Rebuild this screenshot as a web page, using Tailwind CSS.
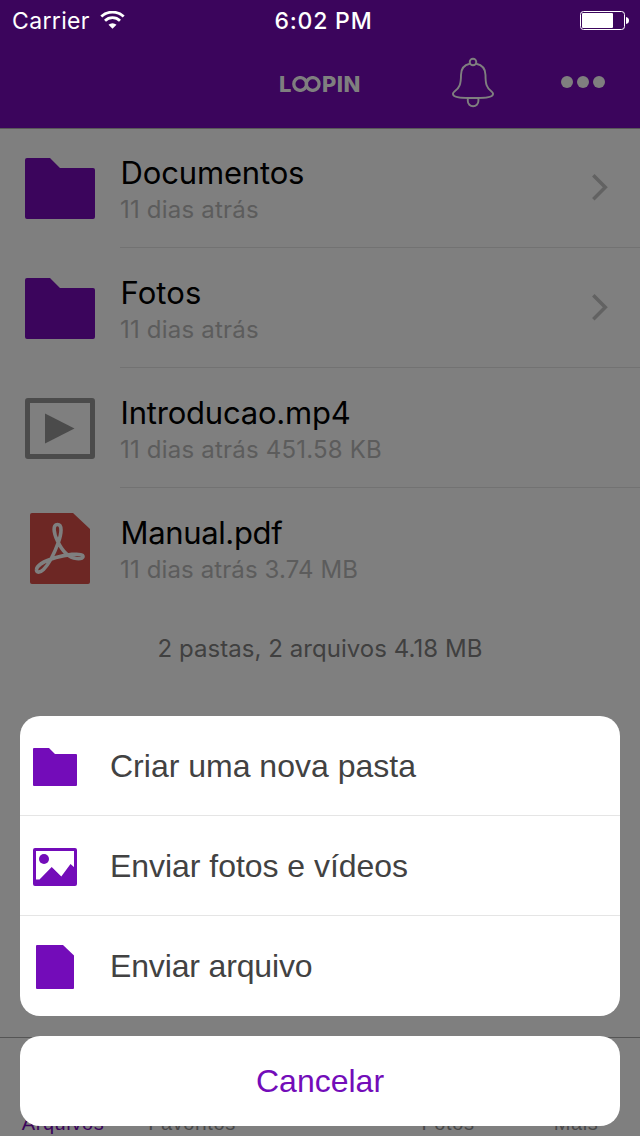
<!DOCTYPE html>
<html lang="pt-BR">
<head>
<meta charset="utf-8">
<title>Loopin</title>
<script src="https://cdn.jsdelivr.net/npm/@tailwindcss/browser@4"></script>
</head>
<body class="bg-[#7f7f7f] font-['Inter',sans-serif]">
<div class="relative w-[640px] h-[1136px] overflow-hidden flex flex-col bg-[#7f7f7f]">
  <header class="h-32 shrink-0 bg-[#3b055c] flex flex-col">
    <div class="h-10 grid grid-cols-3 items-center text-white text-[23px] leading-10 pl-3 pr-[11px]">
      <div class="flex items-center gap-[10px]">
        <span class="tracking-[0.35px] whitespace-nowrap mt-px -mb-px">Carrier</span>
        <svg class="w-[25px] h-[18px]" viewBox="0 0 25 18" fill="none" stroke="#fff"><path d="M1.300 5.600a16.200 16.200 0 0 1 22.400 0" stroke-width="2.800"/><path d="M5 9.700a10.900 10.900 0 0 1 15 0" stroke-width="2.800"/><path d="M12.500 17.800 8.500 13.700a6 6 0 0 1 8 0Z" fill="#fff" stroke="none"/></svg>
      </div>
      <div class="text-center font-medium tracking-[0.8px] whitespace-nowrap pl-[6px] mt-px -mb-px">6:02 PM</div>
      <svg class="justify-self-end w-[49px] h-[19px]" viewBox="0 0 49 19"><rect x=".5" y=".5" width="44" height="18" rx="3" fill="none" stroke="#fff"/><rect x="2" y="2" width="31" height="15" rx="1" fill="#fff"/><path d="M46 6q3 .5 3 3.500t-3 3.500Z" fill="#fff"/></svg>
    </div>
    <div class="h-[88px] flex items-center pl-[279px]">
      <div class="w-[82px] h-4 mt-[-1px] flex items-center text-[#7f7f7f] font-extrabold text-[22px] leading-4">
        <span class="w-[13px] shrink-0">L</span>
        <svg class="w-[30px] h-4 shrink-0" viewBox="0 0 30 16" fill="none" stroke="#7f7f7f" stroke-width="3.300"><circle cx="8.200" cy="8" r="6.400"/><circle cx="20.700" cy="8" r="6.400"/></svg>
        <span class="tracking-[0.4px]">PIN</span>
      </div>
      <svg class="w-[44px] h-[52px] ml-[90px] mt-[-3px]" viewBox="0 0 44 52" fill="none" stroke="#7f7f7f" stroke-width="1.900"><circle cx="22" cy="5" r="3.300"/><path d="M18.800 6.800C13 8 10 12 10 18C10 27 8.500 31 3.500 34.500C1.500 36 1.500 37.500 3 38.800C6 41.800 38 41.800 41 38.800C42.500 37.500 42.500 36 40.500 34.500C35.500 31 34.500 27 34.500 18C34.500 12 31 8 25.200 6.800"/><path d="M16.800 41v3a5.300 5.300 0 0 0 10.600 0v-3"/></svg>
      <div class="ml-[66px] mt-[-4px] flex gap-1"><i class="size-3 rounded-full bg-[#7f7f7f]"></i><i class="size-3 rounded-full bg-[#7f7f7f]"></i><i class="size-3 rounded-full bg-[#7f7f7f]"></i></div>
    </div>
  </header>
  <main class="relative flex-1 shadow-[inset_0_1px_0_#595959]">
    <div class="h-[120px] flex pl-[25px]">
      <svg class="w-[70px] h-[61px] mt-[30px] shrink-0" viewBox="0 0 70 61" fill="#3b055c"><path d="M2 0H25L35 10H68q2 0 2 2V59q0 2-2 2H2q-2 0-2-2V2q0-2 2-2Z"/></svg>
      <div class="ml-[25px] flex-1 border-b border-[#727272] flex justify-between pr-[32px]">
        <div class="pt-[25px]"><div class="text-[31px] leading-10 text-black tracking-[-0.15px] pl-[0.5px]">Documentos</div><div class="pt-px text-[24px] leading-8 text-[#5c5c5c] tracking-[0.2px]">11 dias atrás</div></div>
        <svg class="w-4 h-[27px] mt-[46px]" viewBox="0 0 16 27" fill="none" stroke="#626262" stroke-width="3.500"><path d="M1.300 1.300 13.300 13.300 1.300 25.300"/></svg>
      </div>
    </div>
    <div class="h-[120px] flex pl-[25px]">
      <svg class="w-[70px] h-[61px] mt-[30px] shrink-0" viewBox="0 0 70 61" fill="#3b055c"><path d="M2 0H25L35 10H68q2 0 2 2V59q0 2-2 2H2q-2 0-2-2V2q0-2 2-2Z"/></svg>
      <div class="ml-[25px] flex-1 border-b border-[#727272] flex justify-between pr-[32px]">
        <div class="pt-[25px]"><div class="text-[31px] leading-10 text-black tracking-[0.1px] pl-[0.5px]">Fotos</div><div class="pt-px text-[24px] leading-8 text-[#5c5c5c] tracking-[0.2px]">11 dias atrás</div></div>
        <svg class="w-4 h-[27px] mt-[46px]" viewBox="0 0 16 27" fill="none" stroke="#626262" stroke-width="3.500"><path d="M1.300 1.300 13.300 13.300 1.300 25.300"/></svg>
      </div>
    </div>
    <div class="h-[120px] flex pl-[25px]">
      <svg class="w-[70px] h-[61px] mt-[30px] shrink-0" viewBox="0 0 70 61"><rect x="2.500" y="2.500" width="65" height="56" rx=".5" fill="none" stroke="#4b4b4b" stroke-width="5"/><path d="M20 15.500 49.500 30.500 20 45.500Z" fill="#4b4b4b"/></svg>
      <div class="ml-[25px] flex-1 border-b border-[#727272]">
        <div class="pt-[25px]"><div class="text-[31px] leading-10 text-black tracking-[-0.2px] pl-[0.5px]">Introducao.mp4</div><div class="pt-px text-[24px] leading-8 text-[#5c5c5c] tracking-[0.2px]">11 dias atrás 451.58 KB</div></div>
      </div>
    </div>
    <div class="h-[120px] flex pl-[30px]">
      <svg class="w-[60px] h-[71px] mt-[25px] shrink-0" viewBox="0 0 60 71"><path d="M2 0H43L60 16V69q0 2-2 2H2q-2 0-2-2V2q0-2 2-2Z" fill="#6d2724"/><path d="M27.500 28C23.500 20 22.500 11.500 27.500 11.500C32.500 11.500 31.500 20 28.500 29C24.500 40 18 52 13.500 56.500C10 60 6 60 6.500 56.500C7 51.500 17 47 26 44.500C36 41.500 50 40 52.500 42.300C54.500 44.800 51 46 46.500 45.500C37 44.500 31.500 36.500 27.500 28Z" fill="none" stroke="#7f7f7f" stroke-width="3.600" stroke-linejoin="round"/></svg>
      <div class="ml-[30px] flex-1">
        <div class="pt-[25px]"><div class="text-[31px] leading-10 text-black tracking-[-0.35px] pl-[0.5px]">Manual.pdf</div><div class="pt-px text-[24px] leading-8 text-[#5c5c5c] tracking-[0.12px]">11 dias atrás 3.74 MB</div></div>
      </div>
    </div>
    <div class="pt-[25px] text-center text-[24px] leading-8 text-[#404040] tracking-[0.05px]">2 pastas, 2 arquivos 4.18 MB</div>
  </main>
  <nav class="h-[99px] shrink-0 border-t border-[#555555] font-['Liberation_Sans',sans-serif] text-[20px] leading-6 tracking-[0.6px] text-[#494949] grid grid-cols-5 items-end text-center pb-px">
    <span class="text-[#3b055c] pr-[2px]">Arquivos</span><span>Favoritos</span><span></span><span>Fotos</span><span>Mais</span>
  </nav>
  <div class="absolute inset-x-5 bottom-[10px] flex flex-col gap-5 font-['Liberation_Sans',sans-serif] text-[32px]">
    <div class="h-[300px] rounded-[20px] bg-white text-[#424242] overflow-hidden">
      <div class="h-[100px] flex items-center border-b border-[#e5e5e5] pl-[13px] gap-[33px]">
        <svg class="w-[44px] h-[38px] mt-[3px]" viewBox="0 0 44 38" fill="#730cb9"><path d="M1 0H16L22 6H43q1 0 1 1V37q0 1-1 1H1q-1 0-1-1V1q0-1 1-1Z"/></svg>
        <span>Criar uma nova pasta</span>
      </div>
      <div class="h-[100px] flex items-center border-b border-[#e5e5e5] pl-[13px] gap-[33px]">
        <svg class="w-[44px] h-[38px] mt-[3px]" viewBox="0 0 44 38" fill="#730cb9"><rect x="1.500" y="1.500" width="41" height="35" rx=".5" fill="none" stroke="#730cb9" stroke-width="3"/><circle cx="11" cy="11" r="5"/><path d="M2 31.500H6.500L18.700 19 28.300 28.500 37.500 16 42 20V37H2Z"/></svg>
        <span class="tracking-[-0.04px]">Enviar fotos e vídeos</span>
      </div>
      <div class="h-[100px] flex items-center pl-4 gap-9">
        <svg class="w-[38px] h-[44px] mt-[2px]" viewBox="0 0 38 44" fill="#730cb9"><path d="M1 0H27L38 10.500V43q0 1-1 1H1q-1 0-1-1V1q0-1 1-1Z"/></svg>
        <span class="tracking-[-0.15px]">Enviar arquivo</span>
      </div>
    </div>
    <div class="h-[90px] rounded-[20px] bg-white text-[#730cb9] flex items-center justify-center">Cancelar</div>
  </div>
</div>
</body>
</html>
